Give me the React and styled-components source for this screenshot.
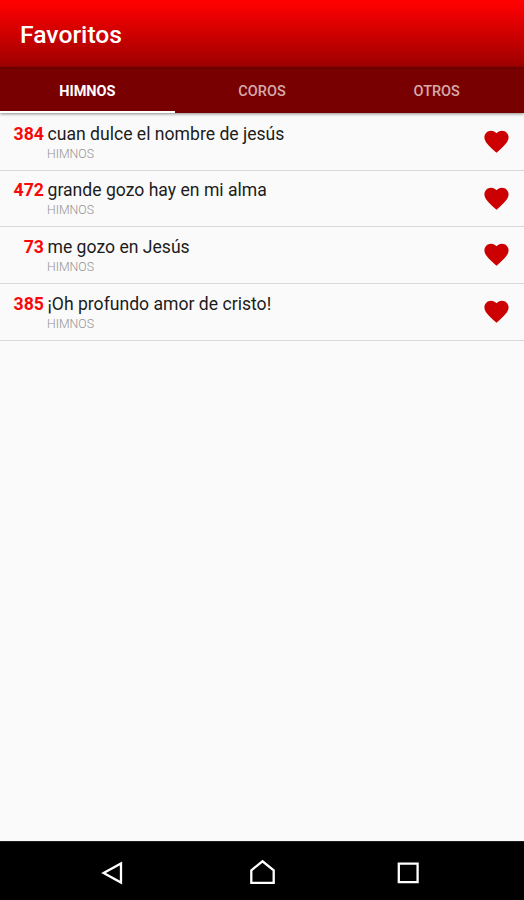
import React from 'react';
import styled, { createGlobalStyle } from 'styled-components';

const GlobalStyle = createGlobalStyle`
  * {
    box-sizing: border-box;
  }

  body {
    margin: 0;
    background-color: #fafafa;
    font-family: Roboto, 'Liberation Sans', sans-serif;
  }
`;

const Screen = styled.div`
  display: flex;
  flex-direction: column;
  width: 100%;
  height: 100vh;
  overflow: hidden;
`;

const Header = styled.header`
  flex: none;
  display: flex;
  align-items: center;
  height: 67px;
  padding: 3px 20px 0;
  background: linear-gradient(to bottom, #ff0000, #fb0000 8%, #9c0000);
`;

const Title = styled.h1`
  margin: 0;
  color: #fff;
  font-size: 24.7px;
  font-weight: 500;
  line-height: 28px;
`;

const TabBar = styled.nav`
  flex: none;
  display: flex;
  height: 46px;
  background: linear-gradient(to bottom, #640000, #780000 3px);
  box-shadow: 0 1px 3px rgba(0, 0, 0, 0.45);
`;

const Tab = styled.button`
  flex: 1;
  padding: 4px 0 0;
  border: none;
  border-bottom: 2px solid ${({ $active }) => ($active ? '#fff' : 'transparent')};
  background: none;
  color: ${({ $active }) => ($active ? '#fff' : '#d6abab')};
  font-family: inherit;
  font-size: 14.5px;
  font-weight: ${({ $active }) => ($active ? 700 : 500)};
`;

const HymnList = styled.ul`
  flex: 1;
  margin: 0;
  padding: 1px 0 0;
  list-style: none;
`;

const HymnRow = styled.li`
  display: flex;
  align-items: center;
  height: 56.7px;
  padding-right: 12.7px;
  border-bottom: 1px solid #d8d8d8;
`;

const HymnNumber = styled.span`
  align-self: flex-start;
  width: 44px;
  padding-top: 8.5px;
  color: #f80808;
  font-size: 17.7px;
  font-weight: 700;
  line-height: 22px;
  text-align: right;
`;

const HymnInfo = styled.div`
  flex: 1;
  align-self: flex-start;
  padding: 8.5px 0 0 3px;
`;

const HymnTitle = styled.div`
  padding-left: 0.5px;
  color: #1c1c1c;
  font-size: 17.6px;
  line-height: 22px;
`;

const HymnCategory = styled.div`
  padding-top: 1px;
  color: #949494;
  font-size: 12.3px;
  font-weight: 300;
  line-height: 16px;
`;

const FavoriteButton = styled.button`
  display: flex;
  padding: 0 0 0.6px;
  border: none;
  background: none;
  color: #cc0000;
`;

const NavigationBar = styled.footer`
  flex: none;
  display: flex;
  justify-content: center;
  gap: 116px;
  align-items: center;
  height: 59px;
  padding-top: 4px;
  border-top: 1px solid #1c1c1c;
  background-color: #000;
`;

const tabs = ['HIMNOS', 'COROS', 'OTROS'];

const hymns = [
  { number: 384, title: 'cuan dulce el nombre de jesús' },
  { number: 472, title: 'grande gozo hay en mi alma' },
  { number: 73, title: 'me gozo en Jesús' },
  { number: 385, title: '¡Oh profundo amor de cristo!' },
];

const HeartIcon = () => (
  <svg width="29" height="29" viewBox="0 0 24 24" fill="currentColor">
    <path d="M12 21.35l-1.45-1.32C5.4 15.36 2 12.28 2 8.5 2 5.42 4.42 3 7.5 3c1.74 0 3.41.81 4.5 2.09C13.09 3.81 14.76 3 16.5 3 19.58 3 22 5.42 22 8.5c0 3.78-3.4 6.86-8.55 11.54L12 21.35z" />
  </svg>
);

const NavIcon = ({ d }) => (
  <svg width="30" height="30" viewBox="0 0 30 30" fill="none" stroke="#fff" strokeWidth="2.3" strokeLinejoin="miter">
    <path d={d} />
  </svg>
);

const App = () => {
  return (
    <Screen>
      <GlobalStyle />
      <Header>
        <Title>Favoritos</Title>
      </Header>
      <TabBar>
        {tabs.map((tab, index) => (
          <Tab key={tab} $active={index === 0}>{tab}</Tab>
        ))}
      </TabBar>
      <HymnList>
        {hymns.map((hymn) => (
          <HymnRow key={hymn.number}>
            <HymnNumber>{hymn.number}</HymnNumber>
            <HymnInfo>
              <HymnTitle>{hymn.title}</HymnTitle>
              <HymnCategory>HIMNOS</HymnCategory>
            </HymnInfo>
            <FavoriteButton aria-label="Favorito">
              <HeartIcon />
            </FavoriteButton>
          </HymnRow>
        ))}
      </HymnList>
      <NavigationBar>
        <NavIcon d="M20 5.5V24.5L2.6 15Z" />
        <NavIcon d="M4.3 12.3L15.5 3.3L26.7 12.3V24.9H4.3Z" />
        <NavIcon d="M5.8 5.6H24.6V24.2H5.8Z" />
      </NavigationBar>
    </Screen>
  );
};

export default App;
